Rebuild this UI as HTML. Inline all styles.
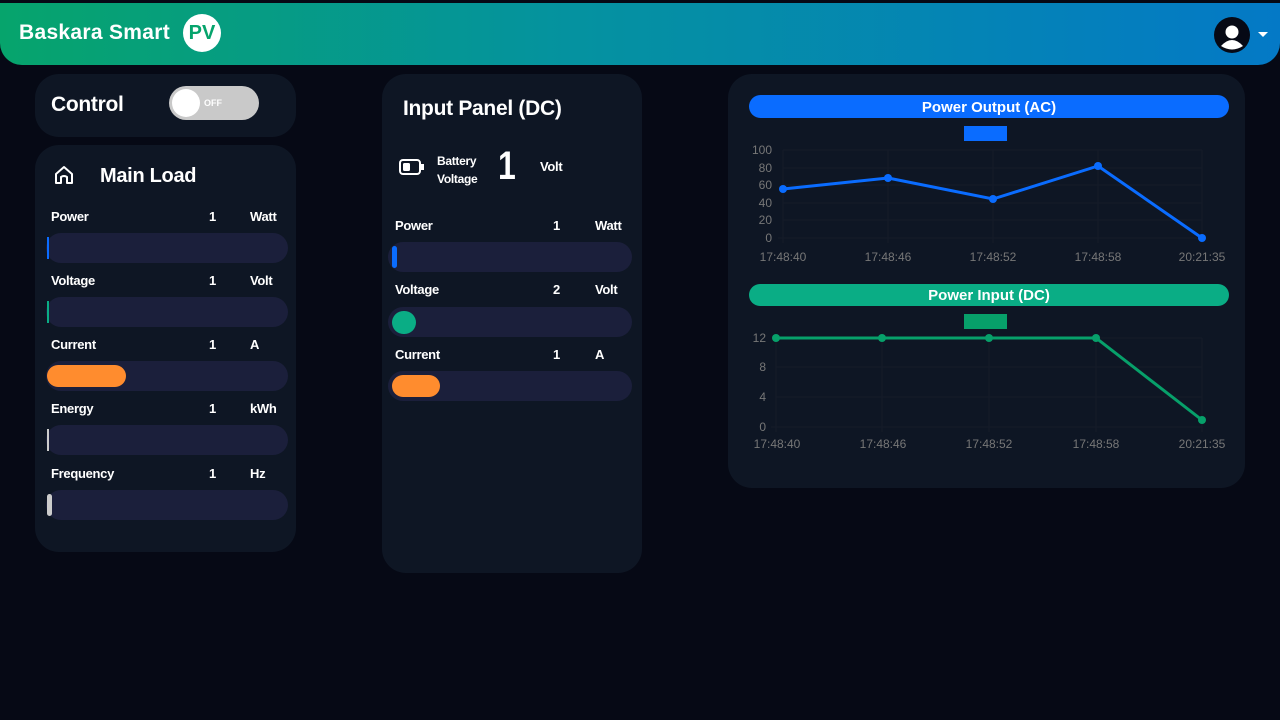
<!DOCTYPE html>
<html><head><meta charset="utf-8"><style>
*{margin:0;padding:0;box-sizing:border-box}
body{width:1280px;height:720px;background:#060915;font-family:"Liberation Sans",sans-serif;color:#fff;position:relative;overflow:hidden}
.hdr{position:absolute;left:0;top:3px;width:1280px;height:62px;background:linear-gradient(90deg,#06a46c 0%,#0592a0 45%,#0479c6 100%);border-radius:0 0 22px 22px}
.logo{position:absolute;left:19px;top:18px;font-size:21px;font-weight:bold;letter-spacing:.3px}
.pv{position:absolute;left:183px;top:11px;width:38px;height:38px;border-radius:50%;background:#fff;color:#06a46c;font-weight:bold;font-size:20px;text-align:center;line-height:38px}
.card{position:absolute;background:#0e1624;border-radius:24px}
.t{position:absolute;font-weight:bold;font-size:13px;letter-spacing:-.3px}
.bar{position:absolute;height:30px;background:#1b1f3b;border-radius:15px}
</style></head><body>
<div class="hdr">
<div class="logo">Baskara Smart</div><div class="pv">PV</div>
<svg style="position:absolute;left:1214px;top:14px" width="36" height="36" viewBox="0 0 36 36"><circle cx="18" cy="18" r="18" fill="#060915"/><circle cx="18" cy="15" r="6.5" fill="#fff"/><path d="M7 29 Q18 17 29 29 Q18 36 7 29Z" fill="#fff"/></svg>
<svg style="position:absolute;left:1258px;top:29px" width="10" height="6"><path d="M0 0H10L5 5Z" fill="#fff"/></svg>
</div>

<div class="card" style="left:35px;top:74px;width:261px;height:63px">
<div class="t" style="left:16px;top:19px;font-size:21px">Control</div>
<div style="position:absolute;left:134px;top:12px;width:90px;height:34px;border-radius:17px;background:#c9c9c9"><div style="position:absolute;left:3px;top:3px;width:28px;height:28px;border-radius:50%;background:#fff"></div><div style="position:absolute;left:35px;top:12px;font-size:9px;font-weight:bold;color:#fff">OFF</div></div>
</div>

<div class="card" style="left:35px;top:145px;width:261px;height:407px">
<svg style="position:absolute;left:18px;top:19px" width="22" height="22" viewBox="0 0 22 22"><path d="M3 10 L11 3 L19 10 V19 H14 V13 Q11 11 8 13 V19 H3Z" fill="none" stroke="#fff" stroke-width="2" stroke-linejoin="round"/></svg>
<div class="t" style="left:65px;top:20px;font-size:20px">Main Load</div>
<div class="t" style="left:16px;top:64px">Power</div><div class="t" style="left:174px;top:64px">1</div><div class="t" style="left:215px;top:64px">Watt</div>
<div class="bar" style="left:11px;top:88px;width:242px"><div style="position:absolute;left:1px;top:4px;width:2px;height:22px;background:#0a6cff"></div></div>
<div class="t" style="left:16px;top:128px">Voltage</div><div class="t" style="left:174px;top:128px">1</div><div class="t" style="left:215px;top:128px">Volt</div>
<div class="bar" style="left:11px;top:152px;width:242px"><div style="position:absolute;left:1px;top:4px;width:2px;height:22px;background:#0aad85"></div></div>
<div class="t" style="left:16px;top:192px">Current</div><div class="t" style="left:174px;top:192px">1</div><div class="t" style="left:215px;top:192px">A</div>
<div class="bar" style="left:11px;top:216px;width:242px"><div style="position:absolute;left:1px;top:4px;width:79px;height:22px;border-radius:11px;background:#ff8c2e"></div></div>
<div class="t" style="left:16px;top:256px">Energy</div><div class="t" style="left:174px;top:256px">1</div><div class="t" style="left:215px;top:256px">kWh</div>
<div class="bar" style="left:11px;top:280px;width:242px"><div style="position:absolute;left:1px;top:4px;width:2px;height:22px;background:#ccc"></div></div>
<div class="t" style="left:16px;top:321px">Frequency</div><div class="t" style="left:174px;top:321px">1</div><div class="t" style="left:215px;top:321px">Hz</div>
<div class="bar" style="left:11px;top:345px;width:242px"><div style="position:absolute;left:1px;top:4px;width:5px;height:22px;border-radius:3px;background:#ccc"></div></div>
</div>

<div class="card" style="left:382px;top:74px;width:260px;height:499px">
<div class="t" style="left:21px;top:23px;font-size:21px">Input Panel (DC)</div>
<svg style="position:absolute;left:17px;top:84px" width="26" height="18" viewBox="0 0 26 18"><rect x="1" y="2" width="20" height="14" rx="3" fill="none" stroke="#fff" stroke-width="2"/><rect x="4" y="5" width="7" height="8" rx="1.5" fill="#fff"/><rect x="22" y="6" width="3" height="6" fill="#fff"/></svg>
<div class="t" style="left:55px;top:78px;font-size:12px;line-height:18px">Battery<br>Voltage</div>
<div class="t" style="left:116px;top:70px;font-size:40px;font-weight:bold;transform:scaleX(.8);transform-origin:left">1</div>
<div class="t" style="left:158px;top:85px">Volt</div>
<div class="t" style="left:13px;top:144px">Power</div><div class="t" style="left:171px;top:144px">1</div><div class="t" style="left:213px;top:144px">Watt</div>
<div class="bar" style="left:6px;top:168px;width:244px"><div style="position:absolute;left:4px;top:4px;width:5px;height:22px;border-radius:3px;background:#0a6cff"></div></div>
<div class="t" style="left:13px;top:208px">Voltage</div><div class="t" style="left:171px;top:208px">2</div><div class="t" style="left:213px;top:208px">Volt</div>
<div class="bar" style="left:6px;top:233px;width:244px"><div style="position:absolute;left:4px;top:4px;width:24px;height:23px;border-radius:12px;background:#0aad85"></div></div>
<div class="t" style="left:13px;top:273px">Current</div><div class="t" style="left:171px;top:273px">1</div><div class="t" style="left:213px;top:273px">A</div>
<div class="bar" style="left:6px;top:297px;width:244px"><div style="position:absolute;left:4px;top:4px;width:48px;height:22px;border-radius:11px;background:#ff8c2e"></div></div>
</div>

<div class="card" style="left:728px;top:74px;width:517px;height:414px"></div>
<svg style="position:absolute;left:0;top:0" width="1280" height="720" font-family="Liberation Sans, sans-serif">
<rect x="749" y="95" width="480" height="23" rx="11.5" fill="#0a6cff"/>
<text x="989" y="112" fill="#fff" font-size="15" font-weight="bold" text-anchor="middle">Power Output (AC)</text>
<rect x="964" y="126" width="43" height="15" fill="#0a6cff"/>
<g stroke="#151c29" stroke-width="1">
<line x1="783" y1="150" x2="1202" y2="150"/><line x1="783" y1="168" x2="1202" y2="168"/><line x1="783" y1="185" x2="1202" y2="185"/><line x1="783" y1="203" x2="1202" y2="203"/><line x1="783" y1="220" x2="1202" y2="220"/><line x1="778" y1="238" x2="1202" y2="238"/>
<line x1="783" y1="150" x2="783" y2="243"/><line x1="888" y1="150" x2="888" y2="243"/><line x1="993" y1="150" x2="993" y2="243"/><line x1="1098" y1="150" x2="1098" y2="243"/><line x1="1202" y1="150" x2="1202" y2="243"/>
</g>
<g fill="#777" font-size="12" text-anchor="end">
<text x="772" y="154">100</text><text x="772" y="172">80</text><text x="772" y="189">60</text><text x="772" y="207">40</text><text x="772" y="224">20</text><text x="772" y="242">0</text></g>
<g fill="#777" font-size="12" text-anchor="middle">
<text x="783" y="261">17:48:40</text><text x="888" y="261">17:48:46</text><text x="993" y="261">17:48:52</text><text x="1098" y="261">17:48:58</text><text x="1202" y="261">20:21:35</text></g>
<polyline points="783,189 888,178 993,199 1098,166 1202,238" fill="none" stroke="#0a6cff" stroke-width="3"/>
<g fill="#0a6cff"><circle cx="783" cy="189" r="4"/><circle cx="888" cy="178" r="4"/><circle cx="993" cy="199" r="4"/><circle cx="1098" cy="166" r="4"/><circle cx="1202" cy="238" r="4"/></g>

<rect x="749" y="284" width="480" height="22" rx="11" fill="#0aad85"/>
<text x="989" y="300" fill="#fff" font-size="15" font-weight="bold" text-anchor="middle">Power Input (DC)</text>
<rect x="964" y="314" width="43" height="15" fill="#07a06a"/>
<g stroke="#151c29" stroke-width="1">
<line x1="776" y1="338" x2="1202" y2="338"/><line x1="776" y1="367" x2="1202" y2="367"/><line x1="776" y1="397" x2="1202" y2="397"/><line x1="771" y1="427" x2="1202" y2="427"/>
<line x1="776" y1="338" x2="776" y2="432"/><line x1="882" y1="338" x2="882" y2="432"/><line x1="989" y1="338" x2="989" y2="432"/><line x1="1096" y1="338" x2="1096" y2="432"/><line x1="1202" y1="338" x2="1202" y2="432"/>
</g>
<g fill="#777" font-size="12" text-anchor="end">
<text x="766" y="342">12</text><text x="766" y="371">8</text><text x="766" y="401">4</text><text x="766" y="431">0</text></g>
<g fill="#777" font-size="12" text-anchor="middle">
<text x="777" y="448">17:48:40</text><text x="883" y="448">17:48:46</text><text x="989" y="448">17:48:52</text><text x="1096" y="448">17:48:58</text><text x="1202" y="448">20:21:35</text></g>
<polyline points="776,338 882,338 989,338 1096,338 1202,420" fill="none" stroke="#07a06a" stroke-width="3"/>
<g fill="#07a06a"><circle cx="776" cy="338" r="4"/><circle cx="882" cy="338" r="4"/><circle cx="989" cy="338" r="4"/><circle cx="1096" cy="338" r="4"/><circle cx="1202" cy="420" r="4"/></g>
</svg>
</body></html>
